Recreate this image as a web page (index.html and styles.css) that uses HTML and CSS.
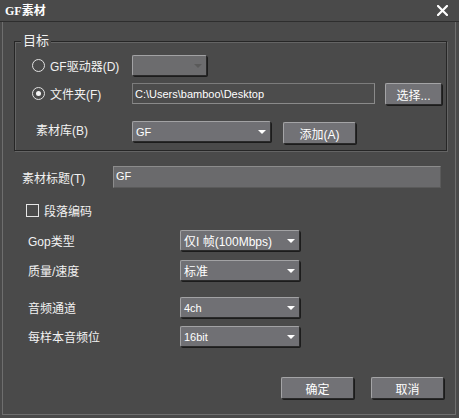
FILE: index.html
```html
<!DOCTYPE html>
<html>
<head>
<meta charset="utf-8">
<link rel="stylesheet" href="styles.css">
</head>
<body>
<div class="window">
  <div class="titlebar">
    <span class="title">GF素材</span>
    <svg class="close" width="11" height="11" viewBox="0 0 11 11"><path d="M1 1L10 10M10 1L1 10" stroke="#fff" stroke-width="2.2" stroke-linecap="square"/></svg>
  </div>
  <div class="frame">
    <div class="group">
      <span class="legend">目标</span>
      <div class="grow r1">
        <label class="radio-cell"><span class="radio"></span><span>GF驱动器(D)</span></label>
        <div class="select disabled w75"><span class="arrow dim"></span></div>
      </div>
      <div class="grow r2">
        <label class="radio-cell"><span class="radio on"></span><span>文件夹(F)</span></label>
        <div class="field path">C:\Users\bamboo\Desktop</div>
        <div class="btn btn-choose">选择...</div>
      </div>
      <div class="grow r3">
        <span class="lib-label">素材库(B)</span>
        <div class="select w139"><span class="val small">GF</span><span class="arrow"></span></div>
        <div class="btn btn-add">添加(A)</div>
      </div>
    </div>

    <div class="row title-row">
      <span class="title-label">素材标题(T)</span>
      <div class="field title-field">GF</div>
    </div>

    <label class="row check-row"><span class="check"></span><span>段落编码</span></label>

    <div class="row opt r-gop">
      <span class="opt-label">Gop类型</span>
      <div class="select w120"><span class="val">仅I 帧(100Mbps)</span><span class="arrow"></span></div>
    </div>
    <div class="row opt r-q">
      <span class="opt-label">质量/速度</span>
      <div class="select w120"><span class="val">标准</span><span class="arrow"></span></div>
    </div>
    <div class="row opt r-ch">
      <span class="opt-label">音频通道</span>
      <div class="select w120"><span class="val small">4ch</span><span class="arrow"></span></div>
    </div>
    <div class="row opt r-bit">
      <span class="opt-label">每样本音频位</span>
      <div class="select w120"><span class="val small">16bit</span><span class="arrow"></span></div>
    </div>

    <div class="row actions">
      <div class="btn btn-ok">确定</div>
      <div class="btn btn-cancel">取消</div>
    </div>
  </div>
</div>
</body>
</html>
```

FILE: styles.css
```css
html, body {
  margin: 0;
  padding: 0;
  background: #4a4a4a;
}
body {
  font-family: "Liberation Sans", "Noto Sans CJK SC", sans-serif;
  font-size: 12px;
  color: #f2f2f2;
}
.window {
  width: 459px;
  height: 418px;
  background: #4a4a4a;
  display: flex;
  flex-direction: column;
  box-sizing: border-box;
}
.titlebar {
  height: 22px;
  box-sizing: border-box;
  border-bottom: 1px solid #2e2e2e;
  display: flex;
  align-items: center;
  justify-content: space-between;
  padding: 0 11px 1px 5px;
}
.title {
  font-weight: bold;
  font-size: 12px;
  color: #fff;
  font-family: "Liberation Serif", "Noto Sans CJK SC", serif;
}
.title {
  letter-spacing: 0;
}
.close {
  display: block;
}
.frame {
  margin: 0 3px 3px 2px;
  width: 454px;
  flex: 1;
  box-sizing: border-box;
  border: 1px solid #6e6e6e;
  border-top: none;
  display: flex;
  flex-direction: column;
}
.group {
  position: relative;
  margin: 19px 0 0 11px;
  width: 433px;
  height: 110px;
  box-sizing: border-box;
  border: 1px solid #262626;
  box-shadow: inset 1px 1px 0 #646464, 1px 1px 0 #646464;
  padding-top: 13px;
}
.legend {
  position: absolute;
  top: -9px;
  left: 6px;
  padding: 0 2px;
  background: #4a4a4a;
  font-size: 13px;
  line-height: 16px;
}
.grow {
  display: flex;
  align-items: center;
}
.r1 { height: 21px; }
.r2 { height: 22px; margin-top: 7px; align-items: flex-start; }
.r3 { height: 23px; margin-top: 16px; align-items: flex-start; }
.radio-cell {
  width: 117px;
  box-sizing: border-box;
  padding-left: 17px;
  display: flex;
  align-items: center;
  gap: 5px;
  height: 21px;
  font-size: 12px;
}
.radio {
  width: 13px;
  height: 13px;
  box-sizing: border-box;
  border: 1.5px solid #e2e2e2;
  border-radius: 50%;
  position: relative;
  flex: none;
}
.radio.on::after {
  content: "";
  position: absolute;
  left: 2.5px;
  top: 2.5px;
  width: 5px;
  height: 5px;
  border-radius: 50%;
  background: #f4f4f4;
}
.lib-label {
  width: 117px;
  box-sizing: border-box;
  padding-left: 21px;
  line-height: 21px;
}
.select {
  position: relative;
  height: 21px;
  box-sizing: border-box;
  background: #707074;
  border-top: 1px solid #a2a2a4;
  border-left: 1px solid #a2a2a4;
  border-right: 1px solid #2a2a2a;
  border-bottom: 1px solid #2a2a2a;
  border-radius: 2px;
  box-shadow: 1px 1px 0 #1c1c1c;
  display: flex;
  align-items: center;
  padding-left: 3px;
  color: #fff;
}
.select.disabled { background: #6c6c6e; }
.w75 { width: 75px; }
.w139 { width: 139px; }
.w120 { width: 120px; }
.val { font-size: 12px; white-space: nowrap; }
.val.small { font-size: 11px; }
.arrow {
  position: absolute;
  right: 4px;
  top: 8px;
  width: 0;
  height: 0;
  border-left: 4px solid transparent;
  border-right: 4px solid transparent;
  border-top: 4px solid #fff;
}
.arrow.dim { border-top-color: #5a5a5a; }
.field {
  height: 21px;
  box-sizing: border-box;
  display: flex;
  align-items: center;
  padding-left: 2px;
  font-size: 11px;
  color: #fff;
}
.path {
  width: 243px;
  background: #4c4c4c;
  border: 1px solid #7c7c7c;
  border-right-color: #8a8a8a;
  border-bottom-color: #8a8a8a;
}
.btn {
  height: 22px;
  box-sizing: border-box;
  background: #727276;
  border-top: 1px solid #a4a4a6;
  border-left: 1px solid #a4a4a6;
  border-right: 1px solid #2a2a2a;
  border-bottom: 1px solid #2a2a2a;
  border-radius: 2px;
  box-shadow: 1px 1px 0 #1c1c1c;
  display: flex;
  align-items: center;
  justify-content: center;
  color: #fff;
  font-size: 12px;
}
.btn-choose { width: 57px; margin-left: 10px; }
.btn-add { width: 73px; margin-left: 12px; margin-top: 1px; }
.row {
  display: flex;
  align-items: center;
}
.title-row { margin-top: 15px; height: 22px; }
.title-label {
  width: 110px;
  box-sizing: border-box;
  padding-left: 19px;
}
.title-field {
  width: 328px;
  height: 22px;
  background: #6a6a6c;
  border-top: 1px solid #8c8c8c;
  border-left: 1px solid #8c8c8c;
  border-bottom: 1px solid #5a5a5a;
  border-right: 1px solid #5a5a5a;
  align-items: flex-start;
  padding-top: 3px;
}
.check-row {
  margin-top: 16px;
  height: 13px;
  padding-left: 23px;
  gap: 5px;
}
.check {
  width: 13px;
  height: 13px;
  box-sizing: border-box;
  border: 1.5px solid #e6e6e6;
  flex: none;
}
.opt { height: 21px; }
.opt-label {
  width: 177px;
  box-sizing: border-box;
  padding-left: 25px;
}
.r-gop { margin-top: 13px; }
.r-q { margin-top: 9px; }
.r-ch { margin-top: 16px; }
.r-bit { margin-top: 8px; }
.actions {
  margin-top: 30px;
  justify-content: flex-end;
  padding-right: 11px;
  gap: 17px;
}
.btn-ok, .btn-cancel { width: 73px; }
```
